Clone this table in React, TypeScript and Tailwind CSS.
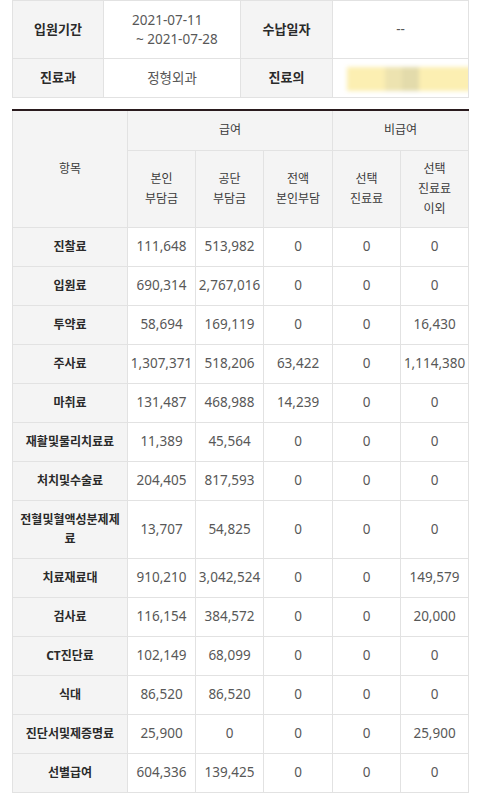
import React from "react";

type Row = { name: string; vals: string[]; tall?: boolean };

const rows: Row[] = [
  { name: "진찰료", vals: ["111,648", "513,982", "0", "0", "0"] },
  { name: "입원료", vals: ["690,314", "2,767,016", "0", "0", "0"] },
  { name: "투약료", vals: ["58,694", "169,119", "0", "0", "16,430"] },
  { name: "주사료", vals: ["1,307,371", "518,206", "63,422", "0", "1,114,380"] },
  { name: "마취료", vals: ["131,487", "468,988", "14,239", "0", "0"] },
  { name: "재활및물리치료료", vals: ["11,389", "45,564", "0", "0", "0"] },
  { name: "처치및수술료", vals: ["204,405", "817,593", "0", "0", "0"] },
  { name: "전혈및혈액성분제제료", vals: ["13,707", "54,825", "0", "0", "0"], tall: true },
  { name: "치료재료대", vals: ["910,210", "3,042,524", "0", "0", "149,579"] },
  { name: "검사료", vals: ["116,154", "384,572", "0", "0", "20,000"] },
  { name: "CT진단료", vals: ["102,149", "68,099", "0", "0", "0"] },
  { name: "식대", vals: ["86,520", "86,520", "0", "0", "0"] },
  { name: "진단서및제증명료", vals: ["25,900", "0", "0", "0", "25,900"] },
  { name: "선별급여", vals: ["604,336", "139,425", "0", "0", "0"] },
];

const th = "border border-[#e2e2e2] bg-[#f4f4f4] font-normal text-[12px] text-[#3a3a3a] text-center align-middle leading-[20px]";
const label = "border border-[#e2e2e2] bg-[#f4f4f4] font-bold text-[12px] text-[#2a2a2a] text-center align-middle";
const cell = "border border-[#e2e2e2] bg-white text-[13.5px] text-[#585858] text-center align-middle";

const App = () => {
  return (
    <div className="w-[480px] min-h-[797px] bg-white font-['Noto_Sans','Noto_Sans_CJK_KR',sans-serif]">
      {/* 진료 정보 */}
      <table className="ml-3 w-[456px] table-fixed border-collapse">
        <colgroup>
          <col className="w-[91px]" />
          <col className="w-[137px]" />
          <col className="w-[92px]" />
          <col className="w-[136px]" />
        </colgroup>
        <tbody>
          <tr className="h-[58px]">
            <td className={label + " text-[13px]"}>입원기간</td>
            <td className={cell + " text-left"}>
              <div className="flex flex-col items-start pl-[28px] leading-[19px]">
                <span>2021-07-11</span>
                <span className="pl-[4px]">~ 2021-07-28</span>
              </div>
            </td>
            <td className={label + " text-[13px]"}>수납일자</td>
            <td className={cell}>--</td>
          </tr>
          <tr className="h-[39px]">
            <td className={label + " text-[13px]"}>진료과</td>
            <td className={cell + " text-[12.5px]"}>정형외과</td>
            <td className={label + " text-[13px]"}>진료의</td>
            <td className={cell + " relative overflow-hidden"}>
              <div className="absolute left-[14px] top-[8px] flex h-[24px] w-[130px] blur-[2px]">
                <div className="w-[38px] bg-[#fcefb2]" />
                <div className="w-[17px] bg-[#ede3b0]" />
                <div className="w-[17px] bg-[#e3dbab]" />
                <div className="flex-1 bg-[#fcefb2]" />
              </div>
            </td>
          </tr>
        </tbody>
      </table>

      {/* 진료비 내역 */}
      <table className="ml-3 mt-[11px] w-[456px] table-fixed border-collapse border-t-2 border-t-[#2a1b1e]">
        <colgroup>
          <col className="w-[115px]" />
          <col className="w-[68px]" />
          <col className="w-[68px]" />
          <col className="w-[69px]" />
          <col className="w-[68px]" />
          <col className="w-[68px]" />
        </colgroup>
        <thead>
          <tr className="h-[40px]">
            <th rowSpan={2} className={th + " border-t-2 border-t-[#2a1b1e]"}>
              항목
            </th>
            <th colSpan={3} className={th + " border-t-2 border-t-[#2a1b1e]"}>
              급여
            </th>
            <th colSpan={2} className={th + " border-t-2 border-t-[#2a1b1e]"}>
              비급여
            </th>
          </tr>
          <tr className="h-[77px]">
            <th className={th}>
              본인
              <br />
              부담금
            </th>
            <th className={th}>
              공단
              <br />
              부담금
            </th>
            <th className={th}>
              전액
              <br />
              본인부담
            </th>
            <th className={th}>
              선택
              <br />
              진료료
            </th>
            <th className={th}>
              선택
              <br />
              진료료
              <br />
              이외
            </th>
          </tr>
        </thead>
        <tbody>
          {rows.map((r) => (
            <tr key={r.name} className={r.tall ? "h-[58px]" : "h-[39px]"}>
              <td className={label + " px-[2px] leading-[19px] break-all"}>{r.name}</td>
              {r.vals.map((v, i) => (
                <td key={i} className={cell + " whitespace-nowrap"}>
                  {v}
                </td>
              ))}
            </tr>
          ))}
        </tbody>
      </table>
    </div>
  );
};

export default App;
